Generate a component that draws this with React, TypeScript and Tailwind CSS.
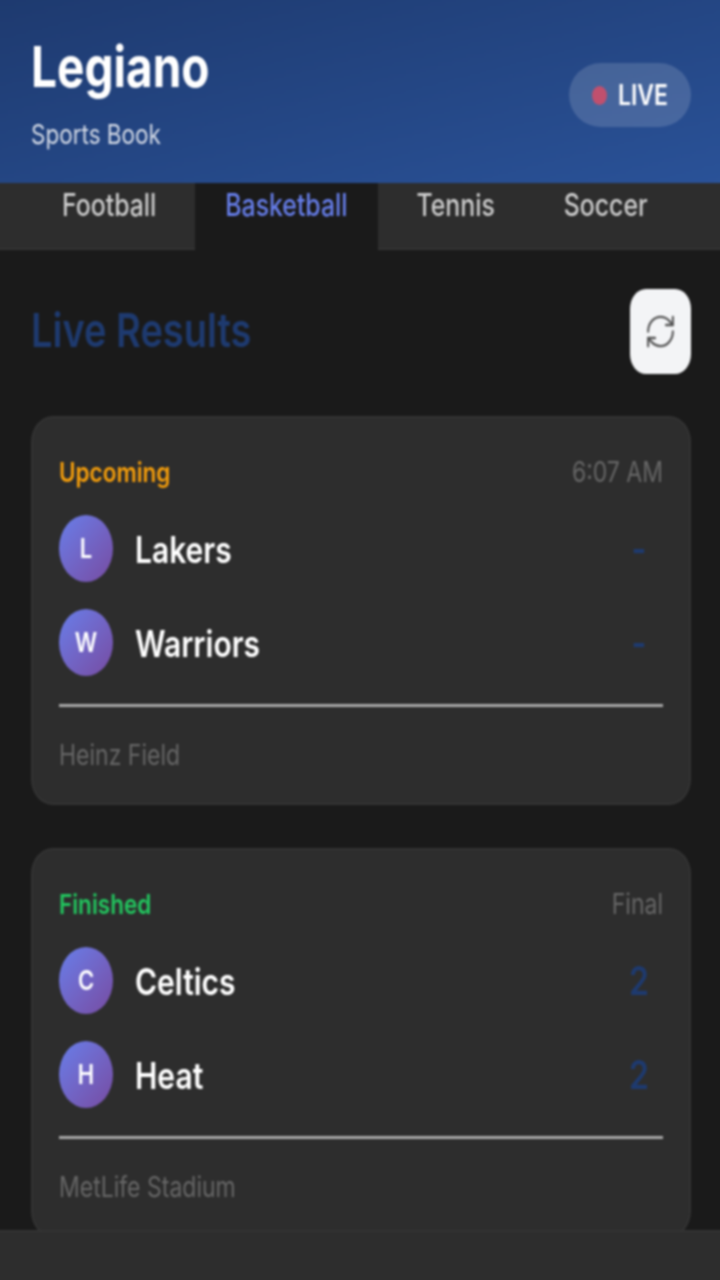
import { RefreshCw } from "lucide-react";
import type { ReactNode } from "react";

// the whole reference is taller than it is wide by about 1.23x, text included
function Tall({ children, className = "" }: { children: ReactNode; className?: string }) {
  return <span className={`inline-block origin-center scale-y-[1.23] ${className}`}>{children}</span>;
}

function Team({ name, score }: { name: string; score: string }) {
  return (
    <div className="flex items-center h-[67px]">
      <div className="flex items-center justify-center w-[54px] h-[67px] rounded-[50%] bg-gradient-to-br from-[#667eea] to-[#764ba2] text-white text-[22px] font-semibold">
        <Tall>{name[0]}</Tall>
      </div>
      <div className="ml-[22px] flex-1 text-white text-[30px] font-semibold leading-[40px]">
        <Tall>{name}</Tall>
      </div>
      <div className="w-[46px] pr-[2px] text-center text-[#1e3a6f] text-[32px] font-semibold leading-[40px]">
        <Tall>{score}</Tall>
      </div>
    </div>
  );
}

function MatchCard({ status, statusColor, time, home, away, venue }: {
  status: string;
  statusColor: string;
  time: string;
  home: [string, string];
  away: [string, string];
  venue: string;
}) {
  return (
    <div className="shrink-0 bg-[#2d2d2d] border-2 border-[#333333] rounded-[22px/26px] px-[26px] pt-[38px] pb-[33px]">
      <div className="flex justify-between items-center h-[32px] text-[23px] leading-[32px]">
        <span className={`font-semibold text-[22.5px] ${statusColor}`}><Tall>{status}</Tall></span>
        <span className="text-[#666666]"><Tall>{time}</Tall></span>
      </div>
      <div className="mt-[27px] flex flex-col gap-[27px]">
        <Team name={home[0]} score={home[1]} />
        <Team name={away[0]} score={away[1]} />
      </div>
      <div className="mt-[28px] h-[3px] bg-[#a8a8a8]" />
      <div className="mt-[33px] text-[23px] leading-[30px] text-[#666666]">
        <Tall>{venue}</Tall>
      </div>
    </div>
  );
}

export default function App() {
  return (
    <div className="h-screen overflow-hidden bg-[#1a1a1a]">
      {/* 3px bleed on each side so the blur doesn't fade at the window edge */}
      <div className="flex flex-col w-[726px] h-[1286px] -ml-[3px] -mt-[3px] overflow-hidden bg-[#1a1a1a] font-['Inter',sans-serif] blur-[0.8px]">
        <header className="shrink-0 h-[186px] flex justify-between bg-gradient-to-br from-[#1e3a6f] to-[#2a5298] pl-[34px] pr-[32px]">
          <div className="pt-[38px]">
            <div className="text-white text-[46px] font-bold leading-[62px]"><Tall>Legiano</Tall></div>
            <div className="mt-[21px] text-white/80 text-[22.5px] leading-[32px]"><Tall>Sports Book</Tall></div>
          </div>
          <div className="mt-[66px] flex items-center h-[64px] w-[122px] pl-[23px] rounded-full bg-white/15">
            <span className="w-[15px] h-[19px] rounded-[50%] bg-[#c0506e]" />
            <span className="ml-[11px] text-white text-[23px] font-semibold"><Tall>LIVE</Tall></span>
          </div>
        </header>

        <nav className="shrink-0 h-[67px] flex pl-[35px] gap-[9px] bg-[#2d2d2d] border-b-2 border-[#333333] text-[24.8px] font-medium leading-[44px] text-[#cccccc]">
          <div className="px-[30px]"><Tall>Football</Tall></div>
          <div className="px-[30px] h-[67px] bg-[#1a1a1a] text-[#667eea]"><Tall>Basketball</Tall></div>
          <div className="px-[30px]"><Tall>Tennis</Tall></div>
          <div className="px-[30px]"><Tall>Soccer</Tall></div>
        </nav>

        <main className="flex-1 min-h-0 overflow-hidden flex flex-col pr-[32px] pl-[34px] pt-[39px]">
          <div className="shrink-0 flex justify-between items-center h-[85px]">
            <h2 className="mb-[2px] text-[#1e3a6f] text-[38px] font-semibold"><Tall>Live Results</Tall></h2>
            <button className="flex items-center justify-center w-[61px] h-[85px] rounded-[16px/20px] bg-[#f3f4f6] text-[#555555]">
              <RefreshCw className="w-[33px] h-[39px]" strokeWidth={1.5} preserveAspectRatio="none" />
            </button>
          </div>
          <div className="mt-[42px] flex flex-col gap-[43px]">
            <MatchCard
              status="Upcoming"
              statusColor="text-[#f59e0b]"
              time="6:07 AM"
              home={["Lakers", "-"]}
              away={["Warriors", "-"]}
              venue="Heinz Field"
            />
            <MatchCard
              status="Finished"
              statusColor="text-[#22c55e]"
              time="Final"
              home={["Celtics", "2"]}
              away={["Heat", "2"]}
              venue="MetLife Stadium"
            />
          </div>
        </main>

        <footer className="shrink-0 h-[53px] bg-[#2d2d2d] border-t-2 border-[#333333]" />
      </div>
    </div>
  );
}
